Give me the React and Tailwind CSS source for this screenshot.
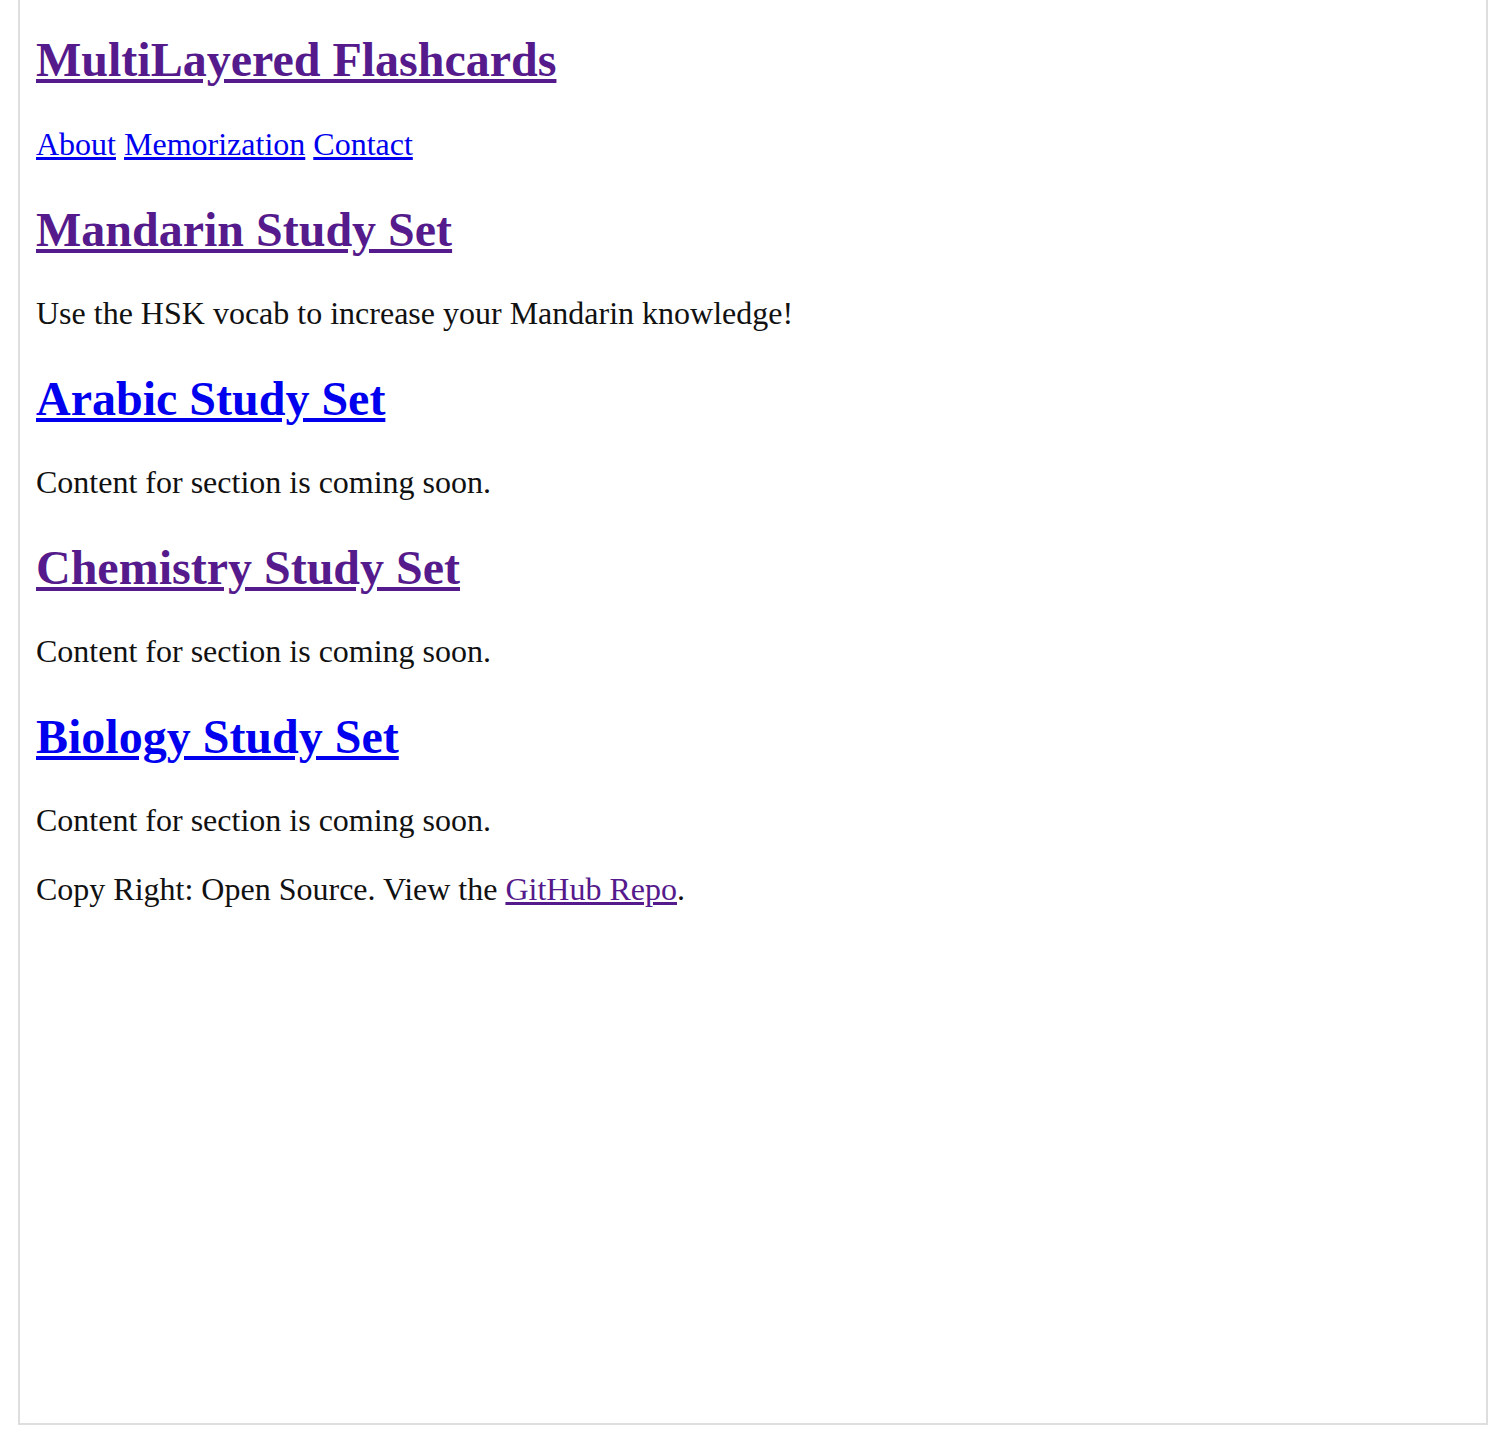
import React from 'react';

const visited = 'text-[#551a8b] underline';
const fresh = 'text-[#0000ee] underline';

const sets = [
  { title: 'Mandarin Study Set', seen: true, text: 'Use the HSK vocab to increase your Mandarin knowledge!' },
  { title: 'Arabic Study Set', seen: false, text: 'Content for section is coming soon.' },
  { title: 'Chemistry Study Set', seen: true, text: 'Content for section is coming soon.' },
  { title: 'Biology Study Set', seen: false, text: 'Content for section is coming soon.' },
];

const App = () => {
  return (
    <div className="min-h-screen bg-white text-[#111] font-['Liberation_Serif','Times_New_Roman',serif]">
      <div className="ml-[18px] w-[1470px] h-[1425px] border-2 border-t-0 border-[#dedede] pl-[16px] pt-[32px]">
        <h1 className="text-[48px] leading-[55px] font-bold">
          <a href="#" className={visited}>MultiLayered Flashcards</a>
        </h1>

        <nav className="mt-[39px] text-[32px] leading-[37px]">
          <a href="#" className={fresh}>About</a>{' '}
          <a href="#" className={fresh}>Memorization</a>{' '}
          <a href="#" className={fresh}>Contact</a>
        </nav>

        {/* study sets */}
        {sets.map((s) => (
          <section key={s.title}>
            <h2 className="mt-[39px] text-[48px] leading-[55px] font-bold">
              <a href="#" className={s.seen ? visited : fresh}>{s.title}</a>
            </h2>
            <p className="mt-[38px] text-[32px] leading-[37px]">{s.text}</p>
          </section>
        ))}

        <footer className="mt-[32px] text-[32px] leading-[37px]">
          Copy Right: Open Source. View the <a href="#" className={visited}>GitHub Repo</a>.
        </footer>
      </div>
    </div>
  );
};

export default App;
